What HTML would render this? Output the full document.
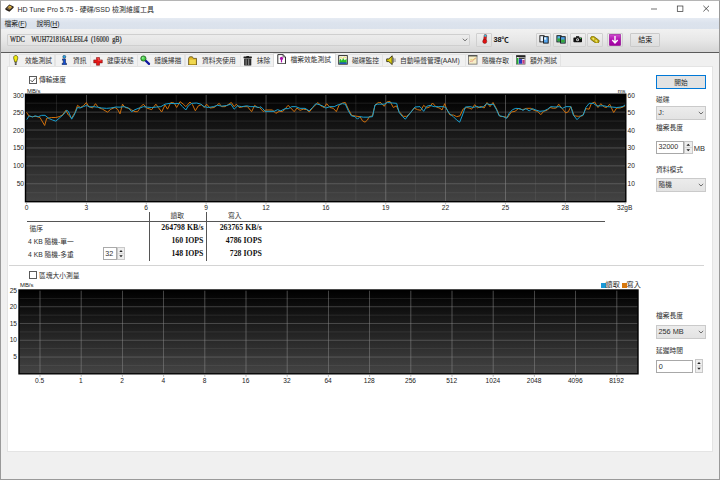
<!DOCTYPE html>
<html lang="zh-Hant">
<head>
<meta charset="utf-8">
<title>HD Tune Pro 5.75 - 硬碟/SSD 檢測維護工具</title>
<style>
*{box-sizing:border-box;margin:0;padding:0}
html,body{width:720px;height:480px;overflow:hidden;background:#f0f0f0}
body{font-family:"Liberation Sans","Noto Sans CJK TC",sans-serif;font-size:6.75px;color:#303030;position:relative;line-height:1}
.abs{position:absolute}
.t{position:absolute;white-space:nowrap;line-height:9px;height:9px}
#win{position:absolute;left:0;top:0;width:720px;height:480px;border:1px solid #9a9a9a;border-top-color:#b5b5b5}
#title{position:absolute;left:0;top:0;width:720px;height:18px;background:#fff}
#menu{position:absolute;left:0;top:18px;width:720px;height:11px;background:linear-gradient(#e6ebf3,#dce3ed 45%,#dbe2ec)}
#tool{position:absolute;left:0;top:29px;width:720px;height:23.5px;background:linear-gradient(#f1f1f1,#e8e8e8 45%,#d5d5d5);border-bottom:1.3px solid #5a5a5a}
#panel{position:absolute;left:7px;top:66.2px;width:705.5px;height:386.1px;background:#fff;border:1px solid #e4e4e4}
.tab{position:absolute;top:54px;height:12.8px;background:#f1f1f1;border:1px solid #e3e3e3;border-bottom:none}
.tab.sel{top:52.6px;height:14.6px;background:#fff;border-color:#dcdcdc}
.tbtn{position:absolute;top:32.8px;height:13.8px;border:1px solid #d0d0d0;background:linear-gradient(#f0f0f0,#e0e0e0);border-radius:1px}
.combo{position:absolute;border:1px solid #cacaca;background:linear-gradient(#ececec,#e3e3e3)}
.edit{position:absolute;border:1px solid #9a9a9a;background:#fff}
svg text.ax{font-family:"Liberation Sans",sans-serif;font-size:6.6px;fill:#222}
svg text.ax2{font-family:"Liberation Sans",sans-serif;font-size:5.9px;fill:#222}
svg .gv{stroke:#909090;stroke-width:0.75;opacity:.68}
svg .gh{stroke:#8a8a8a;stroke-width:0.65;opacity:.66}
svg .gm{stroke:#787878;stroke-width:0.6;opacity:.36}
#charts{position:absolute;left:0;top:0}
.num{position:absolute;font-family:"Liberation Serif",serif;font-weight:bold;font-size:7.8px;letter-spacing:0.03px;white-space:nowrap;line-height:9px;color:#111;text-align:right}
.ic{position:absolute}
</style>
</head>
<body>
<div id="title"></div>
<div id="menu"></div>
<div id="tool"></div>

<!-- title bar -->
<svg class="ic" style="left:5.4px;top:4.2px" width="9" height="8.2" viewBox="0 0 9 8.2"><polygon points="0.4,4.6 4.4,0.5 8.6,2.6 8.6,3.8 4.4,7.8 0.4,5.8" fill="#241c14"/><polygon points="1.2,4.5 4.5,1.2 7.8,2.9 4.4,6.2" fill="#6a5a48"/><circle cx="4.9" cy="3.3" r="1.5" fill="#e8b840"/><circle cx="4.9" cy="3.3" r="0.5" fill="#7a5a20"/></svg>
<div class="t" style="left:17.4px;top:4.5px;font-size:7px;color:#2a2a2a">HD Tune Pro 5.75 - 硬碟/SSD 檢測維護工具</div>
<svg class="ic" style="left:645px;top:0" width="75" height="18" viewBox="0 0 75 18"><g stroke="#333" stroke-width="0.7" fill="none"><line x1="6" y1="9" x2="12" y2="9"/><rect x="32.3" y="6" width="5.6" height="5.6"/><path d="M58.4 5.8 L64 11.4 M64 5.8 L58.4 11.4" stroke-width="0.8"/></g></svg>

<!-- menu -->
<div class="t" style="left:4.5px;top:19px;color:#222">檔案(<u>F</u>)</div>
<div class="t" style="left:36.5px;top:19px;color:#222">說明(<u>H</u>)</div>

<!-- toolbar -->
<div class="combo" style="left:7.2px;top:33.8px;width:463px;height:12px;border-color:#cfcfcf;border-radius:1px"></div>
<div class="t" style="left:10px;top:36px;font-family:'Liberation Serif',serif;font-size:7.2px;color:#1a1a1a;white-space:pre;word-spacing:1.9px;transform-origin:0 50%;transform:scaleX(0.88);-webkit-text-stroke:0.2px #333">WDC  WUH721816ALE6L4 (16000 gB)</div>
<svg class="ic" style="left:460.8px;top:37px" width="8" height="6" viewBox="0 0 8 6"><path d="M1.8 1.7 L4 3.9 L6.2 1.7" stroke="#555" stroke-width="0.85" fill="none"/></svg>
<div class="tbtn" style="left:476.1px;width:15.8px"></div>
<svg class="ic" style="left:480.6px;top:34.4px" width="8" height="10" viewBox="0 0 8 10"><g transform="rotate(6 4 5)"><rect x="2.7" y="0.5" width="2.6" height="6.6" rx="1.1" fill="#e01818" stroke="#601010" stroke-width="0.4"/><rect x="2.9" y="0.6" width="2.2" height="2.2" rx="0.8" fill="#30c8e8"/><circle cx="4" cy="7.4" r="2.1" fill="#e01010" stroke="#601010" stroke-width="0.4"/></g></svg>
<div class="t" style="left:493.6px;top:35px;font-weight:bold;font-size:7.3px;color:#111;letter-spacing:-0.1px">38℃</div>

<div class="tbtn" style="left:535.5px;width:15.4px"></div>
<div class="tbtn" style="left:552.9px;width:15.4px"></div>
<div class="tbtn" style="left:570.2px;width:15.4px"></div>
<div class="tbtn" style="left:587.2px;width:15.7px"></div>
<div class="tbtn" style="left:607px;width:15.8px"></div>
<div class="tbtn" style="left:630.3px;width:30.2px;top:32.8px;height:14px;border-color:#cacaca;background:linear-gradient(#eaeaea,#dddddd)"></div>
<div class="t" style="left:638.2px;top:34.8px;font-size:7px;color:#222">結束</div>
<!-- toolbar icons -->
<svg class="ic" style="left:538.6px;top:35px" width="10.4" height="9" viewBox="0 0 10.4 9"><rect x="0.9" y="0.7" width="4.2" height="6.2" fill="#eef6ff" stroke="#111" stroke-width="0.9"/><rect x="4.6" y="1.7" width="4.6" height="6.4" fill="#58a8f0" stroke="#111" stroke-width="0.9"/><rect x="5.2" y="2.3" width="2" height="2.4" fill="#e8f4ff"/></svg>
<svg class="ic" style="left:556px;top:35px" width="10.4" height="9" viewBox="0 0 10.4 9"><rect x="0.9" y="0.7" width="4.2" height="6.2" fill="#58b8e8" stroke="#111" stroke-width="0.9"/><rect x="1.4" y="3.4" width="3.2" height="3" fill="#38a838"/><rect x="4.6" y="1.7" width="4.6" height="6.4" fill="#50a0e8" stroke="#111" stroke-width="0.9"/><rect x="5.1" y="4.6" width="3.6" height="3" fill="#38a838"/></svg>
<svg class="ic" style="left:573.4px;top:36.2px" width="9.4" height="6.4" viewBox="0 0 9.4 6.4"><rect x="0.4" y="1.4" width="8.6" height="4.8" rx="0.7" fill="#111"/><rect x="3" y="0.2" width="3.2" height="1.6" fill="#111"/><circle cx="4.6" cy="3.8" r="1.5" fill="#e8e8e8"/><circle cx="4.6" cy="3.8" r="0.7" fill="#333"/><rect x="7" y="2" width="1.2" height="1" fill="#30c040"/></svg>
<svg class="ic" style="left:590.4px;top:35.6px" width="9.6" height="7.6" viewBox="0 0 9.6 7.6"><g transform="rotate(36 4.8 3.8)"><rect x="0.2" y="1.7" width="9.2" height="4.2" rx="1.6" fill="#c4b010" stroke="#6a5e08" stroke-width="0.7"/><ellipse cx="3" cy="3.8" rx="1.1" ry="0.8" fill="#f0e880"/><ellipse cx="6.6" cy="3.8" rx="1.1" ry="0.8" fill="#f0e880"/></g></svg>
<svg class="ic" style="left:609.2px;top:33.8px" width="12" height="11.8" viewBox="0 0 12 11.8"><defs><linearGradient id="pg" x1="0" y1="0" x2="0" y2="1"><stop offset="0" stop-color="#d050d0"/><stop offset="0.5" stop-color="#b010b0"/><stop offset="1" stop-color="#a000a0"/></linearGradient></defs><rect x="0.3" y="0.3" width="11.4" height="11.2" rx="0.8" fill="url(#pg)" stroke="#8a088a" stroke-width="0.6"/><path d="M6 1.9 V8 M3.3 6 L6 8.9 L8.7 6" stroke="#fff" stroke-width="1.4" fill="none"/></svg>

<!-- tabs -->
<div class="tab" style="left:8.5px;width:46.8px"></div>
<div class="tab" style="left:54.8px;width:35.8px"></div>
<div class="tab" style="left:90.1px;width:47.6px"></div>
<div class="tab" style="left:137.2px;width:48.3px"></div>
<div class="tab" style="left:185px;width:55.5px"></div>
<div class="tab" style="left:240px;width:33.5px"></div>
<div class="tab" style="left:334.5px;width:48px"></div>
<div class="tab" style="left:382px;width:83.5px"></div>
<div class="tab" style="left:465px;width:47.5px"></div>
<div class="tab" style="left:512px;width:48.5px"></div>
<div id="panel"></div>
<div class="tab sel" style="left:273px;width:63px"></div>

<div class="t" style="left:25px;top:56.3px">效能測試</div>
<div class="t" style="left:73px;top:56.3px">資訊</div>
<div class="t" style="left:106.8px;top:56.3px">健康狀態</div>
<div class="t" style="left:154.3px;top:56.3px">錯誤掃描</div>
<div class="t" style="left:202px;top:56.3px">資料夾使用</div>
<div class="t" style="left:256.8px;top:56.3px">抹除</div>
<div class="t" style="left:290.5px;top:55.3px">檔案效能測試</div>
<div class="t" style="left:352px;top:56.3px">磁碟監控</div>
<div class="t" style="left:400px;top:56.3px">自動噪聲管理(AAM)</div>
<div class="t" style="left:482px;top:56.3px">隨機存取</div>
<div class="t" style="left:530px;top:56.3px">額外測試</div>

<!-- tab icons -->
<svg class="ic" style="left:13.2px;top:55.2px" width="5.4" height="10.2" viewBox="0 0 5.4 10.2"><path d="M2.7 0.5 C4.5 0.5 4.9 2 4.7 3.4 C4.5 4.8 3.8 5.4 3.7 6.9 H1.7 C1.6 5.4 0.9 4.8 0.7 3.4 C0.5 2 0.9 0.5 2.7 0.5 Z" fill="#f0ec10" stroke="#3a3400" stroke-width="0.65"/><rect x="1.7" y="7.1" width="2" height="1.2" fill="#555"/><rect x="1.8" y="8.5" width="1.8" height="1.3" fill="#1a1a1a"/></svg>
<svg class="ic" style="left:60.6px;top:55.1px" width="6.6" height="10.2" viewBox="0 0 6.6 10.2"><circle cx="3.3" cy="1.8" r="1.5" fill="#28a8e8" stroke="#0a2040" stroke-width="0.5"/><path d="M1.5 3.9 H4.5 V8.3 H5.5 V9.8 H1.2 V8.3 H2.3 V5.2 H1.5 Z" fill="#1450d8" stroke="#081840" stroke-width="0.55"/></svg>
<svg class="ic" style="left:93px;top:56.8px" width="10" height="8.8" viewBox="0 0 11 10" preserveAspectRatio="none"><path d="M3.8 0.6 H7.2 V3.3 H10.2 V6.7 H7.2 V9.4 H3.8 V6.7 H0.8 V3.3 H3.8 Z" fill="#e41818" stroke="#7a0c0c" stroke-width="0.6"/><path d="M4.5 1.4 H6 V4 H9 V4.8" stroke="#ff7070" stroke-width="0.6" fill="none"/></svg>
<svg class="ic" style="left:140.3px;top:55.2px" width="11" height="11" viewBox="0 0 11 11"><line x1="5.2" y1="5.2" x2="9" y2="8.9" stroke="#1018a0" stroke-width="2.3" stroke-linecap="round"/><circle cx="3.4" cy="3.5" r="2.6" fill="#48d048" stroke="#1a5a1a" stroke-width="0.8"/><circle cx="2.8" cy="2.9" r="0.9" fill="#a0f0a0"/></svg>
<svg class="ic" style="left:188.2px;top:55.8px" width="9.2" height="9.6" viewBox="0 0 9.2 9.6"><path d="M0.6 2.4 L1.6 0.8 H4.4 L5.4 2.4 H8.6 V9 H0.6 Z" fill="#e0b828" stroke="#4a3a04" stroke-width="0.7"/><rect x="1.5" y="3.6" width="6.2" height="4.5" fill="#f0d850"/></svg>
<svg class="ic" style="left:242.8px;top:55.5px" width="9.4" height="10" viewBox="0 0 9.4 10"><rect x="0.5" y="0.6" width="8.4" height="1.7" rx="0.5" fill="#1c1c1c"/><rect x="3.4" y="0" width="2.6" height="1" fill="#1c1c1c"/><rect x="1.1" y="2.6" width="7.2" height="6.9" rx="0.6" fill="#2a2a2a"/><path d="M3.1 3.2 V9 M5.7 3.2 V9" stroke="#a8a8a8" stroke-width="0.8"/></svg>
<svg class="ic" style="left:276.6px;top:54px" width="9.4" height="10.4" viewBox="0 0 9.4 10.4"><path d="M0.8 0.6 H6 L8.5 3 V9.8 H0.8 Z" fill="#fff" stroke="#1a1a1a" stroke-width="0.9"/><path d="M6 0.6 V3 H8.5" fill="none" stroke="#1a1a1a" stroke-width="0.6"/><circle cx="4.5" cy="4.4" r="1.6" fill="#a810a8"/><rect x="3.9" y="5.4" width="1.2" height="3" fill="#a810a8"/></svg>
<svg class="ic" style="left:338px;top:55.2px" width="10" height="9.8" viewBox="0 0 10 10"><rect x="0.6" y="0.6" width="8.8" height="8.8" fill="#f4f4e8" stroke="#222" stroke-width="0.9"/><path d="M1.3 9 V5.4 L2.6 3.8 L3.8 5.8 L5.2 3 L6.6 5.4 L8.7 4.2 V9 Z" fill="#28c028"/><rect x="1.3" y="7.6" width="7.4" height="1.4" fill="#2040d0"/><path d="M1.4 3.6 L3 2.4 L4.4 3.6 L6 1.9 L8.6 3" stroke="#e8d040" stroke-width="0.7" fill="none"/></svg>
<svg class="ic" style="left:385.6px;top:55.3px" width="10.4" height="10.4" viewBox="0 0 10.4 10.4"><path d="M0.7 3.9 H2.8 L6.2 0.8 V9.6 L2.8 6.6 H0.7 Z" fill="#e0d010" stroke="#1a1800" stroke-width="0.8" stroke-linejoin="round"/><path d="M7.5 2.6 V7.8 M9 3.4 V7" stroke="#777" stroke-width="0.9" fill="none"/></svg>
<svg class="ic" style="left:468.2px;top:55.2px" width="9.6" height="9.8" viewBox="0 0 10 10"><rect x="0.6" y="0.6" width="8.8" height="8.8" fill="#f6eec8" stroke="#666" stroke-width="0.8"/><rect x="0.3" y="0.3" width="9.4" height="1" fill="#333"/><path d="M1.6 7.6 L3.2 6 L4.4 6.8 L6 4.4 L8.4 3.4" stroke="#e07070" stroke-width="0.6" fill="none"/><path d="M1.6 5.6 L3.4 4.6 L5.2 5.2 L8.2 2.6" stroke="#d8c040" stroke-width="0.6" fill="none"/></svg>
<svg class="ic" style="left:516px;top:55.2px" width="9.6" height="9.8" viewBox="0 0 10 10"><rect x="0.6" y="0.6" width="8.8" height="8.8" fill="#fff" stroke="#555" stroke-width="0.8"/><rect x="0.3" y="0.3" width="9.4" height="1.8" fill="#222"/><rect x="0.8" y="3" width="1.8" height="6.2" fill="#20b030"/><rect x="3" y="4.2" width="3.4" height="4.8" fill="#2838c0"/><rect x="6.6" y="5" width="2.4" height="4" fill="#c04080"/><rect x="3" y="2.6" width="6" height="1.4" fill="#333"/></svg>

<!-- checkboxes -->
<div class="abs" style="left:29.3px;top:75.5px;width:8px;height:8px;border:0.75px solid #5a5a5a;background:#fff"></div>
<svg class="ic" style="left:29.3px;top:75.5px" width="8" height="8" viewBox="0 0 8 8"><path d="M1.5 4 L3.2 5.9 L6.6 1.9" stroke="#333" stroke-width="0.8" fill="none"/></svg>
<div class="t" style="left:39px;top:75.3px">傳輸速度</div>
<div class="abs" style="left:29.3px;top:271px;width:8px;height:8px;border:0.75px solid #5a5a5a;background:#fff"></div>
<div class="t" style="left:39px;top:270.8px">區塊大小測量</div>

<svg id="charts" width="720" height="480" viewBox="0 0 720 480">
<defs>
<linearGradient id="g1" x1="0" y1="0" x2="0" y2="1"><stop offset="0" stop-color="#000"/><stop offset="1" stop-color="#444"/></linearGradient>
<linearGradient id="g2" x1="0" y1="0" x2="0" y2="1"><stop offset="0" stop-color="#000"/><stop offset="1" stop-color="#444"/></linearGradient>
</defs>
<rect x="25.5" y="94.2" width="600.3" height="107.49999999999999" fill="url(#g1)"/>
<line x1="25.5" x2="625.8" y1="103.16" y2="103.16" class="gm"/>
<line x1="25.5" x2="625.8" y1="112.12" y2="112.12" class="gh"/>
<line x1="25.5" x2="625.8" y1="121.08" y2="121.08" class="gm"/>
<line x1="25.5" x2="625.8" y1="130.03" y2="130.03" class="gh"/>
<line x1="25.5" x2="625.8" y1="138.99" y2="138.99" class="gm"/>
<line x1="25.5" x2="625.8" y1="147.95" y2="147.95" class="gh"/>
<line x1="25.5" x2="625.8" y1="156.91" y2="156.91" class="gm"/>
<line x1="25.5" x2="625.8" y1="165.87" y2="165.87" class="gh"/>
<line x1="25.5" x2="625.8" y1="174.82" y2="174.82" class="gm"/>
<line x1="25.5" x2="625.8" y1="183.78" y2="183.78" class="gh"/>
<line x1="25.5" x2="625.8" y1="192.74" y2="192.74" class="gm"/>
<line y1="94.2" y2="201.7" x1="56.53" x2="56.53" class="gm"/>
<line y1="94.2" y2="201.7" x1="86.46" x2="86.46" class="gv"/>
<line y1="94.2" y2="201.7" x1="116.39" x2="116.39" class="gm"/>
<line y1="94.2" y2="201.7" x1="146.32" x2="146.32" class="gv"/>
<line y1="94.2" y2="201.7" x1="176.25" x2="176.25" class="gm"/>
<line y1="94.2" y2="201.7" x1="206.18" x2="206.18" class="gv"/>
<line y1="94.2" y2="201.7" x1="236.11" x2="236.11" class="gm"/>
<line y1="94.2" y2="201.7" x1="266.04" x2="266.04" class="gv"/>
<line y1="94.2" y2="201.7" x1="295.97" x2="295.97" class="gm"/>
<line y1="94.2" y2="201.7" x1="325.90" x2="325.90" class="gv"/>
<line y1="94.2" y2="201.7" x1="355.83" x2="355.83" class="gm"/>
<line y1="94.2" y2="201.7" x1="385.76" x2="385.76" class="gv"/>
<line y1="94.2" y2="201.7" x1="415.69" x2="415.69" class="gm"/>
<line y1="94.2" y2="201.7" x1="445.62" x2="445.62" class="gv"/>
<line y1="94.2" y2="201.7" x1="475.55" x2="475.55" class="gm"/>
<line y1="94.2" y2="201.7" x1="505.48" x2="505.48" class="gv"/>
<line y1="94.2" y2="201.7" x1="535.41" x2="535.41" class="gm"/>
<line y1="94.2" y2="201.7" x1="565.34" x2="565.34" class="gv"/>
<line y1="94.2" y2="201.7" x1="595.27" x2="595.27" class="gm"/>
<polyline points="26.33,112.17 29.17,116.17 32.5,116.67 35.83,116.33 40.0,117.5 44.67,125.5 46.67,118.33 51.67,117.5 55.83,117.5 59.17,116.67 62.5,115.0 65.83,110.33 68.33,115.0 71.67,118.0 75.0,112.5 77.5,105.33 80.33,107.5 83.33,105.83 86.33,102.5 88.67,106.33 92.5,108.0 95.5,103.67 98.33,107.5 102.5,109.17 107.5,112.17 110.83,109.17 115.0,107.5 117.5,109.17 120.0,113.83 122.5,104.17 125.0,107.5 129.17,108.33 131.67,110.0 135.0,111.67 137.5,111.67 139.33,109.17 140.0,107.5 143.33,104.17 146.67,108.0 151.67,109.67 155.83,104.17 158.33,107.5 161.67,112.0 165.0,105.0 167.5,109.17 170.83,102.5 174.17,103.0 176.67,107.5 180.0,101.67 183.33,104.17 185.83,106.67 190.0,102.0 192.5,104.67 195.33,110.83 198.33,105.83 201.67,104.67 204.17,107.5 206.67,104.17 210.0,108.0 214.17,107.5 219.17,103.33 221.67,106.67 225.0,106.67 227.5,105.0 231.33,102.5 234.17,106.67 236.33,104.17 239.17,107.5 243.33,106.67 247.5,106.67 251.67,111.67 254.67,105.33 257.5,107.5 259.33,107.5 260.0,108.0 263.33,111.67 265.83,110.0 272.5,110.0 275.83,113.33 279.17,111.33 282.5,111.67 285.0,109.17 288.0,105.33 290.83,108.0 294.17,111.67 297.0,108.0 300.0,110.33 303.33,109.17 306.67,109.67 309.17,112.0 312.5,108.0 315.0,105.33 318.0,102.5 320.83,105.83 324.17,107.5 326.67,103.67 330.0,107.5 333.33,108.33 336.33,111.67 339.17,105.0 342.5,103.0 345.33,102.5 348.33,109.17 351.67,115.33 355.83,116.17 360.0,116.67 362.5,120.83 365.0,122.17 367.5,120.0 369.17,116.67 372.5,115.83 375.0,105.0 378.33,102.5 379.67,102.67 380.0,102.0 384.17,106.33 386.67,102.0 390.0,101.33 393.33,107.5 396.33,105.83 399.17,111.67 403.33,116.33 406.67,116.33 410.0,113.33 414.17,108.0 417.5,109.67 420.83,110.33 423.67,105.33 426.67,108.0 429.67,107.0 432.5,103.0 435.83,106.67 440.0,108.33 442.0,110.0 444.67,103.67 446.67,109.17 450.0,115.0 453.33,115.0 456.67,116.67 460.0,115.83 463.0,109.17 466.67,107.5 469.17,108.0 471.67,109.17 474.67,104.67 477.5,108.0 480.83,106.33 484.17,108.0 487.0,102.5 490.0,106.67 493.0,102.5 496.67,109.17 499.17,115.0 500.0,116.33 504.17,116.67 507.5,117.5 511.33,112.0 515.0,111.33 518.33,108.67 522.5,109.67 526.67,108.33 530.83,108.33 534.17,110.33 537.5,111.33 540.83,114.67 543.67,111.33 547.5,110.0 550.0,107.5 553.33,108.33 556.33,108.0 558.67,104.17 562.0,108.33 565.83,113.0 568.33,111.67 570.83,106.67 574.17,115.83 578.33,116.33 582.5,115.83 585.83,108.67 589.17,109.17 591.33,103.67 594.67,102.0 598.0,107.5 600.83,103.67 604.17,107.0 606.67,107.5 609.67,104.17 613.67,112.5 616.67,108.0 620.0,108.0 623,107 625.5,105.5" fill="none" stroke="#d0700c" stroke-width="1" stroke-linejoin="round"/>
<polyline points="26.67,119.67 29.17,115.83 32.5,117.0 35.0,115.83 38.33,116.67 41.67,115.33 45.0,115.33 49.17,118.67 52.5,120.0 55.83,121.17 60.0,117.5 63.33,114.67 66.67,110.33 68.33,111.33 71.67,119.17 74.17,115.0 77.5,107.5 80.0,108.0 83.33,106.67 86.67,105.33 89.17,107.0 93.33,106.67 97.5,107.17 101.67,108.0 106.67,108.33 110.83,108.0 115.83,107.0 120.0,107.17 124.17,106.67 128.33,108.0 131.67,111.67 135.0,109.67 139.17,108.0 140.0,108.0 143.33,106.67 147.5,107.17 151.67,107.5 156.67,107.0 160.83,106.67 165.0,104.17 170.0,103.33 175.0,103.67 179.17,103.33 182.5,106.67 185.83,110.0 188.33,105.83 191.67,103.33 196.67,103.0 200.83,104.17 204.17,106.67 208.33,107.5 213.33,106.67 217.5,105.33 221.67,106.17 226.67,105.5 230.83,104.17 234.17,109.17 237.5,105.83 241.67,106.67 246.67,105.83 250.83,106.67 255.0,106.67 259.17,107.5 260.0,106.67 262.5,108.33 265.0,111.33 270.0,111.33 274.17,111.33 277.5,109.67 280.83,110.83 285.0,108.67 288.33,108.67 291.67,106.67 295.83,106.67 300.0,108.33 305.0,108.33 309.17,110.83 312.5,107.5 315.83,103.67 319.17,104.67 322.5,105.83 325.83,108.0 330.0,106.67 334.17,106.67 338.33,104.67 342.5,103.67 345.33,104.17 348.33,110.83 351.33,115.83 355.0,116.67 357.5,119.17 360.0,116.67 363.33,117.17 368.33,117.17 372.5,116.67 375.0,105.0 377.5,104.17 379.67,104.17 380.0,104.17 384.17,104.17 387.5,102.5 392.5,103.0 396.67,103.33 399.17,112.5 402.5,116.67 405.33,119.17 410.0,113.33 415.0,107.0 420.0,106.67 423.67,111.33 426.67,106.33 430.0,105.33 434.17,106.67 438.33,106.67 443.33,106.67 445.83,107.5 449.17,113.33 453.33,116.67 456.67,120.0 459.67,122.17 462.5,115.0 465.33,107.0 470.0,106.67 473.33,107.5 476.67,106.33 480.0,107.5 483.33,106.67 486.67,103.67 490.0,104.67 493.33,104.17 496.67,110.0 499.17,115.83 500.0,115.83 503.33,116.67 506.67,118.33 509.17,113.33 512.5,109.67 515.83,108.33 520.0,108.67 523.0,110.33 525.83,108.67 529.17,110.83 532.5,108.67 535.83,110.0 540.0,111.33 544.17,110.83 547.5,109.17 550.83,106.67 555.0,107.0 559.17,106.67 562.5,108.33 565.83,106.67 570.83,106.67 573.33,115.0 577.0,119.67 580.83,115.83 583.33,115.0 585.83,107.5 589.17,103.33 593.33,103.33 596.67,105.83 600.83,105.83 604.17,105.83 607.5,106.67 611.67,107.0 616.67,107.5 620.0,107.17 623,106.5 625.5,104.5" fill="none" stroke="#1aa0d0" stroke-width="1" stroke-linejoin="round"/>
<rect x="25.5" y="94.2" width="600.3" height="107.49999999999999" fill="none" stroke="#000" stroke-width="1.4"/>
<line y1="202.29999999999998" y2="204.29999999999998" x1="26.60" x2="26.60" stroke="#8a8a8a" stroke-width="0.6"/>
<line y1="202.29999999999998" y2="204.29999999999998" x1="86.46" x2="86.46" stroke="#8a8a8a" stroke-width="0.6"/>
<line y1="202.29999999999998" y2="204.29999999999998" x1="146.32" x2="146.32" stroke="#8a8a8a" stroke-width="0.6"/>
<line y1="202.29999999999998" y2="204.29999999999998" x1="206.18" x2="206.18" stroke="#8a8a8a" stroke-width="0.6"/>
<line y1="202.29999999999998" y2="204.29999999999998" x1="266.04" x2="266.04" stroke="#8a8a8a" stroke-width="0.6"/>
<line y1="202.29999999999998" y2="204.29999999999998" x1="325.90" x2="325.90" stroke="#8a8a8a" stroke-width="0.6"/>
<line y1="202.29999999999998" y2="204.29999999999998" x1="385.76" x2="385.76" stroke="#8a8a8a" stroke-width="0.6"/>
<line y1="202.29999999999998" y2="204.29999999999998" x1="445.62" x2="445.62" stroke="#8a8a8a" stroke-width="0.6"/>
<line y1="202.29999999999998" y2="204.29999999999998" x1="505.48" x2="505.48" stroke="#8a8a8a" stroke-width="0.6"/>
<line y1="202.29999999999998" y2="204.29999999999998" x1="565.34" x2="565.34" stroke="#8a8a8a" stroke-width="0.6"/>
<line y1="202.29999999999998" y2="204.29999999999998" x1="625.20" x2="625.20" stroke="#8a8a8a" stroke-width="0.6"/>
<rect x="19" y="290.0" width="619" height="83.80000000000001" fill="url(#g2)"/>
<line x1="19" x2="638" y1="298.38" y2="298.38" class="gm"/>
<line x1="19" x2="638" y1="306.76" y2="306.76" class="gh"/>
<line x1="19" x2="638" y1="315.14" y2="315.14" class="gm"/>
<line x1="19" x2="638" y1="323.52" y2="323.52" class="gh"/>
<line x1="19" x2="638" y1="331.90" y2="331.90" class="gm"/>
<line x1="19" x2="638" y1="340.28" y2="340.28" class="gh"/>
<line x1="19" x2="638" y1="348.66" y2="348.66" class="gm"/>
<line x1="19" x2="638" y1="357.04" y2="357.04" class="gh"/>
<line x1="19" x2="638" y1="365.42" y2="365.42" class="gm"/>
<line y1="290.0" y2="373.8" x1="40.00" x2="40.00" class="gv"/>
<line y1="290.0" y2="373.8" x1="81.20" x2="81.20" class="gv"/>
<line y1="290.0" y2="373.8" x1="122.40" x2="122.40" class="gv"/>
<line y1="290.0" y2="373.8" x1="163.60" x2="163.60" class="gv"/>
<line y1="290.0" y2="373.8" x1="204.80" x2="204.80" class="gv"/>
<line y1="290.0" y2="373.8" x1="246.00" x2="246.00" class="gv"/>
<line y1="290.0" y2="373.8" x1="287.20" x2="287.20" class="gv"/>
<line y1="290.0" y2="373.8" x1="328.40" x2="328.40" class="gv"/>
<line y1="290.0" y2="373.8" x1="369.60" x2="369.60" class="gv"/>
<line y1="290.0" y2="373.8" x1="410.80" x2="410.80" class="gv"/>
<line y1="290.0" y2="373.8" x1="452.00" x2="452.00" class="gv"/>
<line y1="290.0" y2="373.8" x1="493.20" x2="493.20" class="gv"/>
<line y1="290.0" y2="373.8" x1="534.40" x2="534.40" class="gv"/>
<line y1="290.0" y2="373.8" x1="575.60" x2="575.60" class="gv"/>
<line y1="290.0" y2="373.8" x1="616.80" x2="616.80" class="gv"/>
<rect x="19" y="290.0" width="619" height="83.80000000000001" fill="none" stroke="#000" stroke-width="1.4"/>
<line y1="374.40000000000003" y2="376.8" x1="40.00" x2="40.00" stroke="#8a8a8a" stroke-width="0.6"/>
<line y1="374.40000000000003" y2="376.8" x1="81.20" x2="81.20" stroke="#8a8a8a" stroke-width="0.6"/>
<line y1="374.40000000000003" y2="376.8" x1="122.40" x2="122.40" stroke="#8a8a8a" stroke-width="0.6"/>
<line y1="374.40000000000003" y2="376.8" x1="163.60" x2="163.60" stroke="#8a8a8a" stroke-width="0.6"/>
<line y1="374.40000000000003" y2="376.8" x1="204.80" x2="204.80" stroke="#8a8a8a" stroke-width="0.6"/>
<line y1="374.40000000000003" y2="376.8" x1="246.00" x2="246.00" stroke="#8a8a8a" stroke-width="0.6"/>
<line y1="374.40000000000003" y2="376.8" x1="287.20" x2="287.20" stroke="#8a8a8a" stroke-width="0.6"/>
<line y1="374.40000000000003" y2="376.8" x1="328.40" x2="328.40" stroke="#8a8a8a" stroke-width="0.6"/>
<line y1="374.40000000000003" y2="376.8" x1="369.60" x2="369.60" stroke="#8a8a8a" stroke-width="0.6"/>
<line y1="374.40000000000003" y2="376.8" x1="410.80" x2="410.80" stroke="#8a8a8a" stroke-width="0.6"/>
<line y1="374.40000000000003" y2="376.8" x1="452.00" x2="452.00" stroke="#8a8a8a" stroke-width="0.6"/>
<line y1="374.40000000000003" y2="376.8" x1="493.20" x2="493.20" stroke="#8a8a8a" stroke-width="0.6"/>
<line y1="374.40000000000003" y2="376.8" x1="534.40" x2="534.40" stroke="#8a8a8a" stroke-width="0.6"/>
<line y1="374.40000000000003" y2="376.8" x1="575.60" x2="575.60" stroke="#8a8a8a" stroke-width="0.6"/>
<line y1="374.40000000000003" y2="376.8" x1="616.80" x2="616.80" stroke="#8a8a8a" stroke-width="0.6"/>
<text x="24" y="98" text-anchor="end" class="ax">300</text>
<text x="24" y="115" text-anchor="end" class="ax">250</text>
<text x="24" y="133" text-anchor="end" class="ax">200</text>
<text x="24" y="150" text-anchor="end" class="ax">150</text>
<text x="24" y="168" text-anchor="end" class="ax">100</text>
<text x="24" y="186" text-anchor="end" class="ax">50</text>
<text x="627.6" y="98" text-anchor="start" class="ax">60</text>
<text x="627.6" y="115" text-anchor="start" class="ax">50</text>
<text x="627.6" y="133" text-anchor="start" class="ax">40</text>
<text x="627.6" y="150" text-anchor="start" class="ax">30</text>
<text x="627.6" y="168" text-anchor="start" class="ax">20</text>
<text x="627.6" y="186" text-anchor="start" class="ax">10</text>
<text x="26.5" y="209.8" text-anchor="middle" class="ax">0</text>
<text x="86.4" y="209.8" text-anchor="middle" class="ax">3</text>
<text x="146.2" y="209.8" text-anchor="middle" class="ax">6</text>
<text x="206.1" y="209.8" text-anchor="middle" class="ax">9</text>
<text x="265.9" y="209.8" text-anchor="middle" class="ax">12</text>
<text x="325.8" y="209.8" text-anchor="middle" class="ax">16</text>
<text x="385.7" y="209.8" text-anchor="middle" class="ax">19</text>
<text x="445.5" y="209.8" text-anchor="middle" class="ax">22</text>
<text x="505.4" y="209.8" text-anchor="middle" class="ax">25</text>
<text x="565.2" y="209.8" text-anchor="middle" class="ax">28</text>
<text x="617" y="209.8" text-anchor="start" class="ax">32gB</text>
<text x="27" y="93" text-anchor="start" class="ax2">MB/s</text>
<text x="625.5" y="93" text-anchor="end" class="ax2">ms</text>
<text x="17" y="293" text-anchor="end" class="ax">25</text>
<text x="17" y="309" text-anchor="end" class="ax">20</text>
<text x="17" y="326" text-anchor="end" class="ax">15</text>
<text x="17" y="342" text-anchor="end" class="ax">10</text>
<text x="17" y="359" text-anchor="end" class="ax">5</text>
<text x="39.7" y="382.8" text-anchor="middle" class="ax">0.5</text>
<text x="80.9" y="382.8" text-anchor="middle" class="ax">1</text>
<text x="122.1" y="382.8" text-anchor="middle" class="ax">2</text>
<text x="163.3" y="382.8" text-anchor="middle" class="ax">4</text>
<text x="204.5" y="382.8" text-anchor="middle" class="ax">8</text>
<text x="245.7" y="382.8" text-anchor="middle" class="ax">16</text>
<text x="286.9" y="382.8" text-anchor="middle" class="ax">32</text>
<text x="328.1" y="382.8" text-anchor="middle" class="ax">64</text>
<text x="369.3" y="382.8" text-anchor="middle" class="ax">128</text>
<text x="410.5" y="382.8" text-anchor="middle" class="ax">256</text>
<text x="451.7" y="382.8" text-anchor="middle" class="ax">512</text>
<text x="492.9" y="382.8" text-anchor="middle" class="ax">1024</text>
<text x="534.1" y="382.8" text-anchor="middle" class="ax">2048</text>
<text x="575.3" y="382.8" text-anchor="middle" class="ax">4096</text>
<text x="616.5" y="382.8" text-anchor="middle" class="ax">8192</text>
<text x="20" y="287.2" text-anchor="start" class="ax2">MB/s</text>
</svg>

<!-- results table -->
<div class="abs" style="left:26.5px;top:221px;width:578.5px;height:1.2px;background:#555"></div>
<div class="abs" style="left:149px;top:211.5px;width:1.1px;height:49.5px;background:#555"></div>
<div class="abs" style="left:205.5px;top:211.5px;width:1.1px;height:49.5px;background:#555"></div>
<div class="t" style="left:170.5px;top:211px">讀取</div>
<div class="t" style="left:228px;top:211px">寫入</div>
<div class="t" style="left:29.5px;top:224px">循序</div>
<div class="t" style="left:28px;top:237.2px">4 KB 隨機-單一</div>
<div class="t" style="left:28px;top:250.1px">4 KB 隨機-多重</div>
<div class="edit" style="left:103px;top:246.5px;width:13.5px;height:13.3px;border-color:#aaa"></div>
<div class="t" style="left:105.2px;top:248.7px;font-size:7.2px">32</div>
<div class="abs" style="left:116.5px;top:246.5px;width:8.8px;height:13.3px;border:1px solid #c8c8c8;background:#eee"></div>
<svg class="ic" style="left:116.9px;top:246.5px" width="8" height="13.3" viewBox="0 0 8 12.2"><path d="M2.3 4.4 L4 2.5 L5.7 4.4 Z M2.3 7.8 L4 9.7 L5.7 7.8 Z" fill="#222"/><line x1="0.5" x2="7.5" y1="6.1" y2="6.1" stroke="#c8c8c8" stroke-width="0.6"/></svg>

<div class="num" style="left:150px;width:53.5px;top:223.4px">264798 KB/s</div>
<div class="num" style="left:150px;width:53.5px;top:236.4px">160 IOPS</div>
<div class="num" style="left:150px;width:53.5px;top:248.8px">148 IOPS</div>
<div class="num" style="left:208px;width:53.8px;top:223.4px">263765 KB/s</div>
<div class="num" style="left:208px;width:53.8px;top:236.4px">4786 IOPS</div>
<div class="num" style="left:208px;width:53.8px;top:248.8px">728 IOPS</div>

<!-- separator -->
<div class="abs" style="left:8.5px;top:264.6px;width:695px;height:1.2px;background:#d4d4d4"></div>

<!-- legend -->
<div class="abs" style="left:601.2px;top:283px;width:4.4px;height:4.5px;background:#1a98d8"></div>
<div class="t" style="left:605.6px;top:280.5px;font-size:7.1px;color:#1a1a1a">讀取</div>
<div class="abs" style="left:622px;top:283px;width:4.5px;height:4.5px;background:#d8780c"></div>
<div class="t" style="left:626.6px;top:280.5px;font-size:7.1px;color:#1a1a1a">寫入</div>

<!-- right panel top -->
<div class="abs" style="left:656px;top:75px;width:49.8px;height:14px;border:1.2px solid #0078d7;background:#e3e3e3"></div>
<div class="t" style="left:674.3px;top:77.5px">開始</div>
<div class="t" style="left:656px;top:94.5px">磁碟</div>
<div class="combo" style="left:655.6px;top:106px;width:50.4px;height:13.6px"></div>
<div class="t" style="left:658.3px;top:108.3px;font-size:7.3px">J:</div>
<svg class="ic" style="left:696.5px;top:110.3px" width="8" height="6" viewBox="0 0 8 6"><path d="M1.8 1.9 L4 4 L6.2 1.9" stroke="#444" stroke-width="0.75" fill="none"/></svg>
<div class="t" style="left:656px;top:123.2px">檔案長度</div>
<div class="edit" style="left:655.5px;top:140.8px;width:28px;height:13px;border-color:#a8a8a8"></div>
<div class="t" style="left:658.5px;top:142.9px;font-size:7.1px">32000</div>
<div class="abs" style="left:683.5px;top:140.8px;width:9px;height:13px;border:1px solid #c8c8c8;background:#eee"></div>
<svg class="ic" style="left:683.7px;top:140.8px" width="8.5" height="13" viewBox="0 0 8.5 12"><path d="M2.4 4.3 L4.25 2.3 L6.1 4.3 Z M2.4 7.7 L4.25 9.7 L6.1 7.7 Z" fill="#222"/><line x1="0.5" x2="8" y1="6" y2="6" stroke="#c8c8c8" stroke-width="0.6"/></svg>
<div class="t" style="left:693.8px;top:144.3px;font-size:7.5px">MB</div>
<div class="t" style="left:656px;top:165px">資料模式</div>
<div class="combo" style="left:655.6px;top:178px;width:50.4px;height:13.5px"></div>
<div class="t" style="left:658.5px;top:180.4px">隨機</div>
<svg class="ic" style="left:696.5px;top:182.3px" width="8" height="6" viewBox="0 0 8 6"><path d="M1.8 1.9 L4 4 L6.2 1.9" stroke="#444" stroke-width="0.75" fill="none"/></svg>

<!-- right panel bottom -->
<div class="t" style="left:656px;top:310.8px">檔案長度</div>
<div class="combo" style="left:655.6px;top:325.2px;width:50.4px;height:13.5px"></div>
<div class="t" style="left:658.5px;top:327.2px;font-size:7.3px">256 MB</div>
<svg class="ic" style="left:696.5px;top:329.3px" width="8" height="6" viewBox="0 0 8 6"><path d="M1.8 1.9 L4 4 L6.2 1.9" stroke="#444" stroke-width="0.75" fill="none"/></svg>
<div class="t" style="left:656px;top:345.8px">延遲時間</div>
<div class="edit" style="left:655.6px;top:359.8px;width:37px;height:13.2px;border-color:#a8a8a8"></div>
<div class="t" style="left:658.8px;top:361.6px;font-size:7.3px">0</div>
<div class="abs" style="left:695.3px;top:359.4px;width:8.2px;height:13.6px;border:1px solid #c8c8c8;background:#eee"></div>
<svg class="ic" style="left:695.4px;top:359.4px" width="8" height="13.6" viewBox="0 0 8 12.6"><path d="M2.2 4.4 L4 2.4 L5.8 4.4 Z M2.2 8.2 L4 10.2 L5.8 8.2 Z" fill="#222"/><line x1="0.5" x2="7.5" y1="6.3" y2="6.3" stroke="#c8c8c8" stroke-width="0.6"/></svg>

<div id="win"></div>
</body>
</html>
